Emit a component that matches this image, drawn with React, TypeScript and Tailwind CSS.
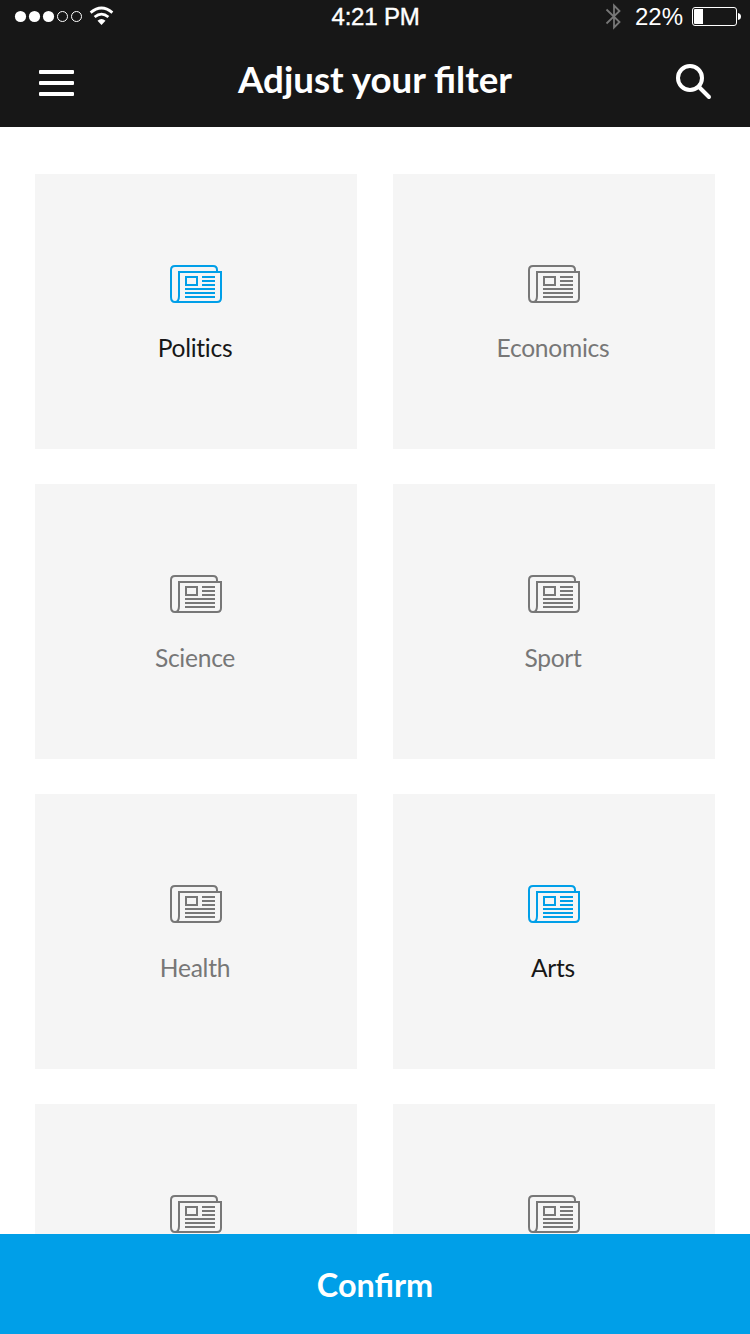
type Topic = { id: number; name?: string; selected?: boolean };

const topics: Topic[] = [
  { id: 1, name: 'Politics', selected: true },
  { id: 2, name: 'Economics' },
  { id: 3, name: 'Science' },
  { id: 4, name: 'Sport' },
  { id: 5, name: 'Health' },
  { id: 6, name: 'Arts', selected: true },
  { id: 7 },
  { id: 8 },
];

function NewsIcon() {
  return (
    <svg width="52" height="38" viewBox="0 0 52 38" fill="none" stroke="currentColor" strokeWidth="2">
      <path d="M47 7V5Q47 1 43 1H5Q1 1 1 5V32Q1 37 5 37Q9 37 9 31V7H51V33Q51 37 47 37H5" />
      <path d="M16 12H27V20H16ZM32 12H45M32 16H45M32 20H45M15 24H45M15 28H45M15 32H45" />
    </svg>
  );
}

function StatusBar() {
  return (
    <div className="grid h-[34px] grid-cols-[1fr_auto_1fr] items-center text-[24px] leading-[34px] [font-family:'Liberation_Sans',Arial,sans-serif]">
      <svg className="ml-[14px]" width="102" height="34" viewBox="14 0 102 34" fill="white">
        <circle cx="20.5" cy="16.5" r="5.6" />
        <circle cx="34.5" cy="16.5" r="5.6" />
        <circle cx="48.5" cy="16.5" r="5.6" />
        <circle cx="62.5" cy="16.5" r="5" fill="none" stroke="white" />
        <circle cx="76.5" cy="16.5" r="5" fill="none" stroke="white" />
        <path d="M90.6 12.6Q101.5 3.4 112.4 12.6M94.6 17Q101.5 11.2 108.4 17" fill="none" stroke="white" strokeWidth="2.7" />
        <path d="M97.5 20.8Q101.5 17.4 105.5 20.8L101.5 25Z" />
      </svg>
      <span className="pl-px tracking-[-0.2px] [-webkit-text-stroke:0.4px_white]">4:21 PM</span>
      <div className="flex items-center justify-end pr-[9px]">
        <svg width="18" height="34" viewBox="604 0 18 34" fill="none" stroke="#777" strokeWidth="1.8">
          <path d="M606.5 9.5L619.5 22L614 27.5V5.5L619.5 11L606.5 23.5" />
        </svg>
        <span className="ml-[13px]">22%</span>
        <svg className="ml-[8px]" width="50" height="34" viewBox="691 0 50 34">
          <rect x="692.5" y="7.5" width="44" height="18" rx="2.5" fill="none" stroke="white" />
          <path d="M695 9H703V24H695Q694 24 694 23V10Q694 9 695 9Z" fill="white" />
          <path d="M738 13Q741 13.5 741 16.5Q741 19.5 738 20Z" fill="white" />
        </svg>
      </div>
    </div>
  );
}

export default function App() {
  return (
    <div className="flex h-[1334px] w-[750px] flex-col overflow-hidden bg-white [font-family:Lato,sans-serif]">
      <header className="h-[127px] shrink-0 bg-[#171717] text-white">
        <StatusBar />
        <div className="grid h-[93px] grid-cols-[1fr_auto_1fr] items-center px-[38px]">
          <button className="ml-px flex w-[35px] flex-col gap-[7px] pt-[5px]" aria-label="Menu">
            <span className="h-1 w-full rounded-[1px] bg-white" />
            <span className="h-1 w-full rounded-[1px] bg-white" />
            <span className="h-1 w-full rounded-[1px] bg-white" />
          </button>
          <h1 className="pb-1 text-[36.7px] leading-[44px] font-bold">Adjust your filter</h1>
          <button className="justify-self-end pt-[2px]" aria-label="Search">
            <svg width="36" height="36" viewBox="0 0 36 36" fill="none" stroke="white" strokeWidth="4">
              <circle cx="14" cy="14" r="12" />
              <path d="M23 23L33 33" strokeLinecap="round" />
            </svg>
          </button>
        </div>
      </header>
      <main className="grid min-h-0 flex-1 auto-rows-[275px] grid-cols-2 gap-x-9 gap-y-[35px] overflow-hidden px-[35px] pt-[47px]">
        {topics.map((topic) => (
          <div
            key={topic.id}
            className={`flex flex-col items-center bg-[#f5f5f5] pt-[91px] ${topic.selected ? 'text-[#171717]' : 'text-[#777]'}`}
          >
            <span className={topic.selected ? 'text-[#009fe8]' : 'text-[#777]'}>
              <NewsIcon />
            </span>
            {topic.name && (
              <span className="mt-[30px] pr-[2px] text-[24.6px] leading-[30px] tracking-[-0.28px]">{topic.name}</span>
            )}
          </div>
        ))}
      </main>
      <button className="h-[100px] shrink-0 bg-[#009fe8] pt-[2px] text-[32.4px] font-bold text-white">Confirm</button>
    </div>
  );
}
